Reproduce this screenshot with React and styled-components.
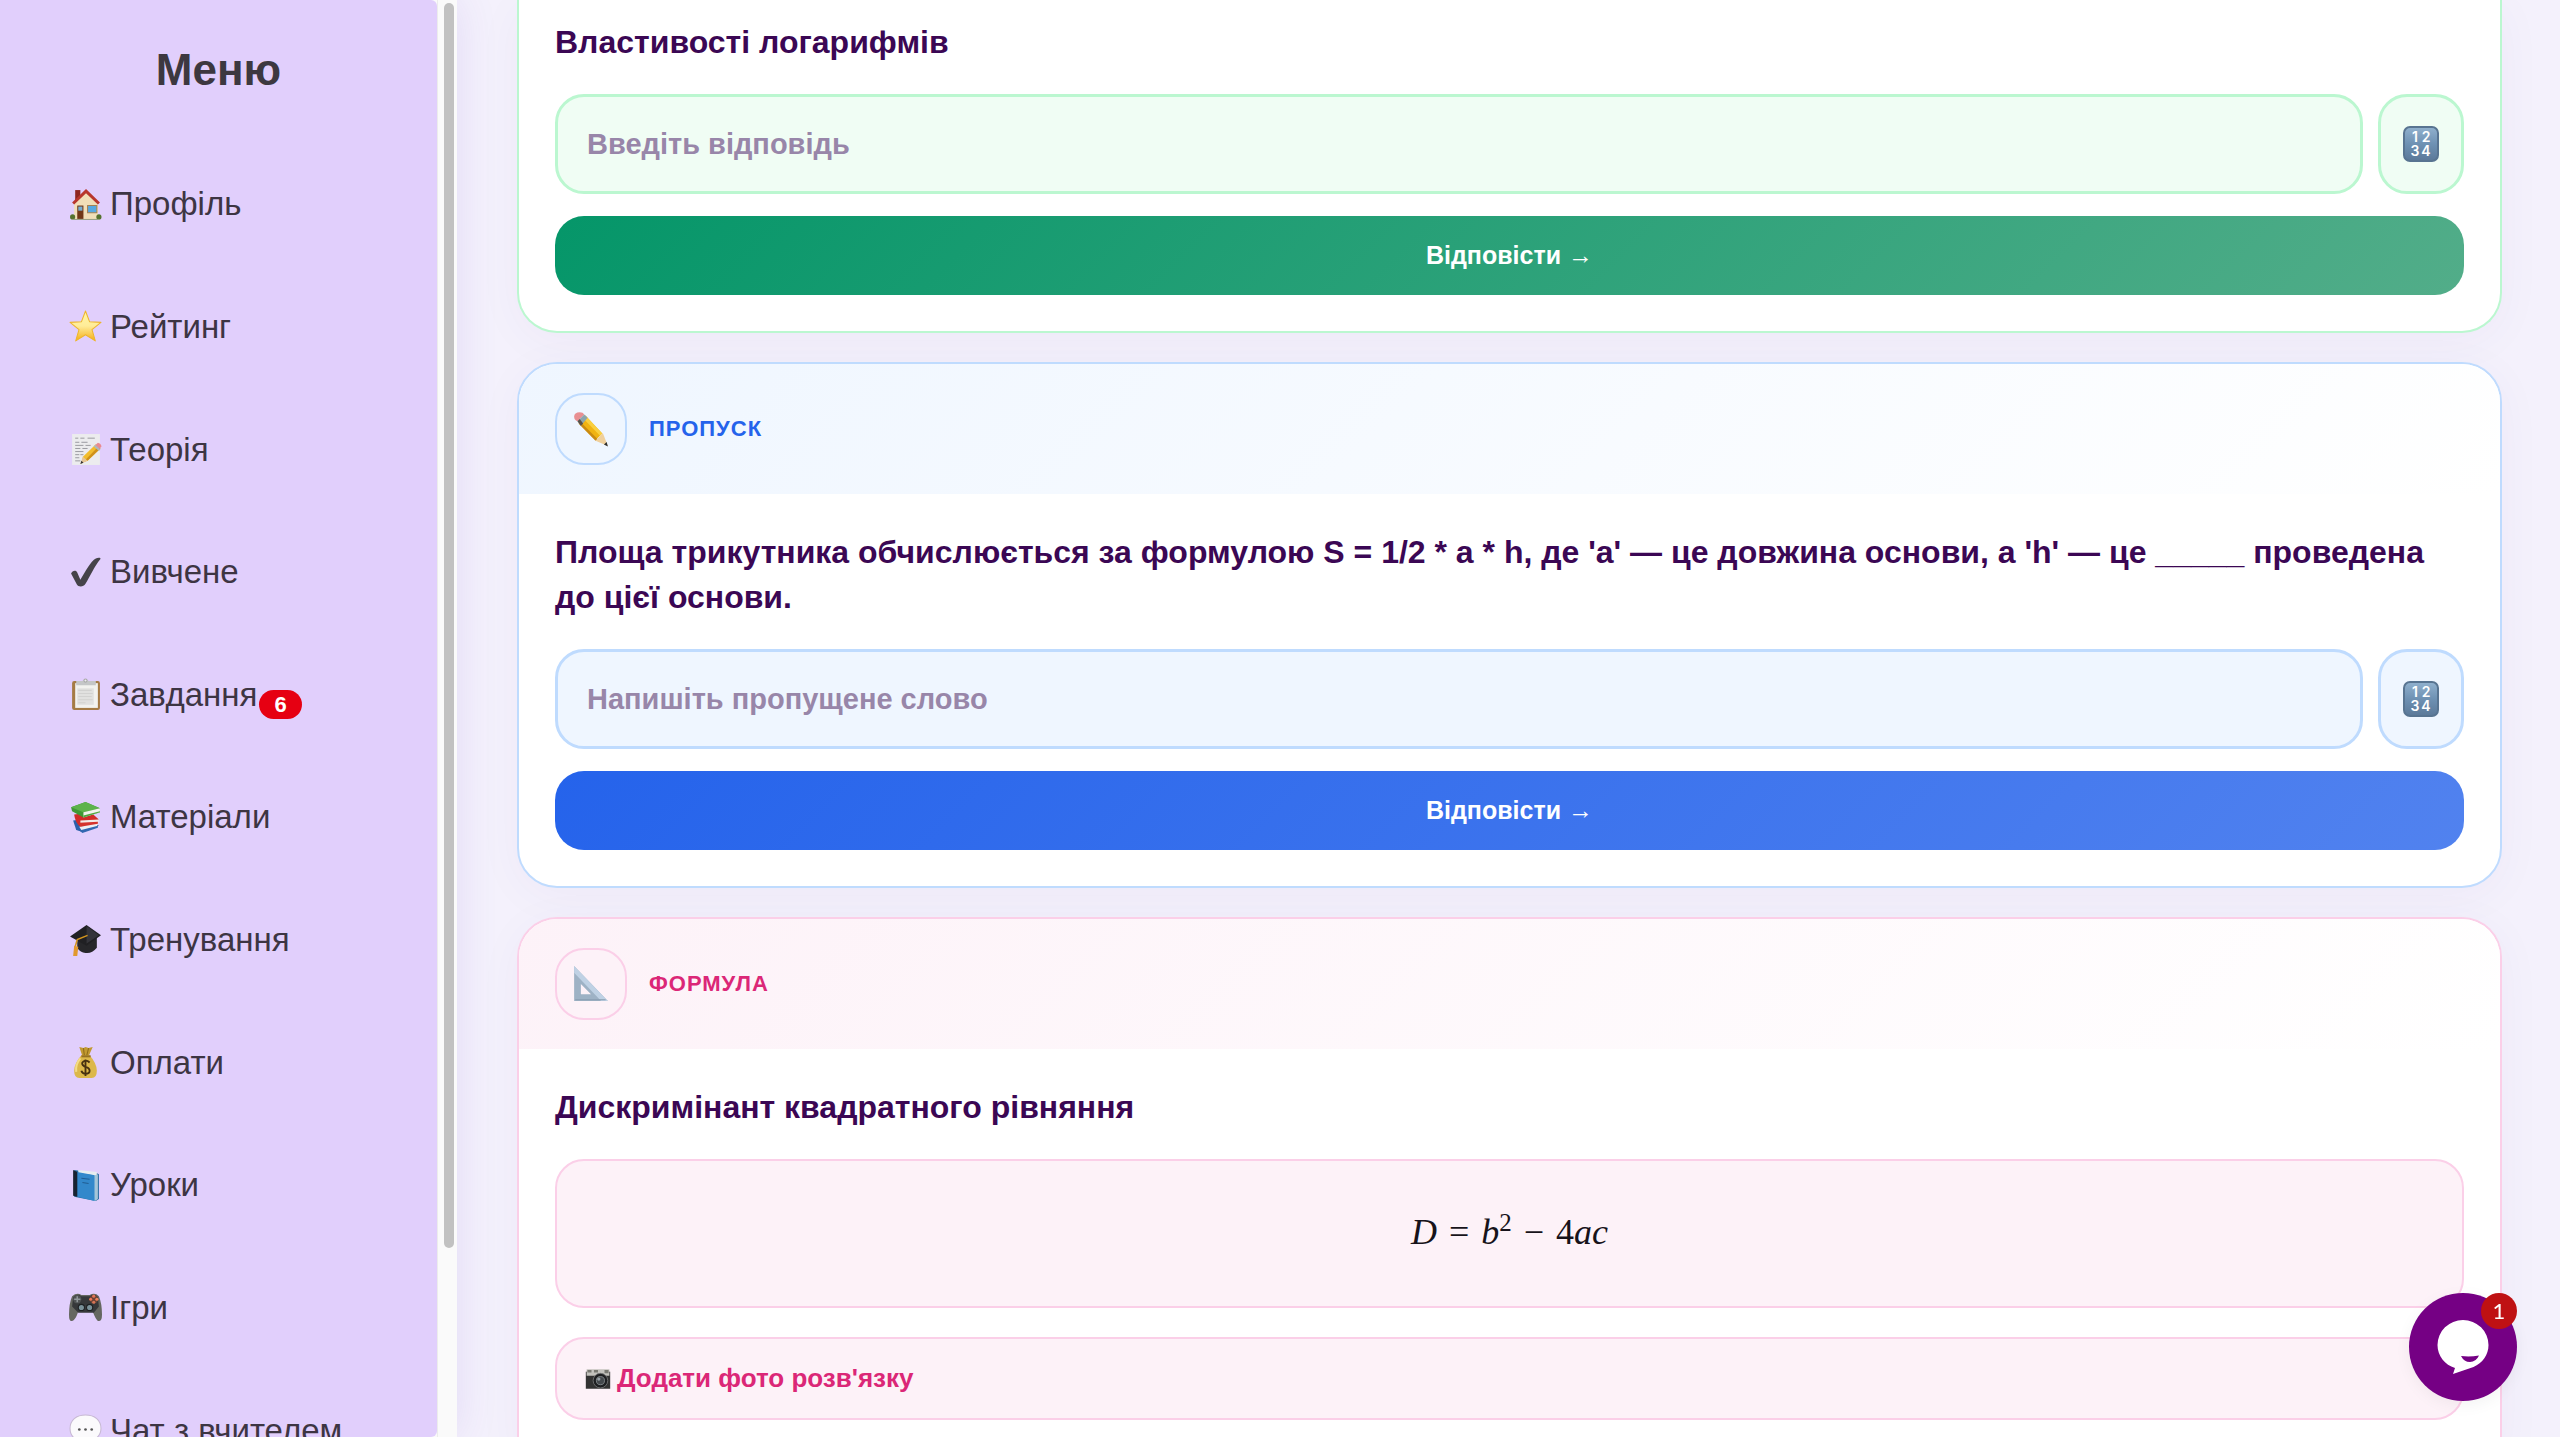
import React from "react";
import styled, { createGlobalStyle } from "styled-components";

const GlobalStyle = createGlobalStyle`
  * {
    box-sizing: border-box;
  }

  body {
    margin: 0;
    font-family: "Liberation Sans", Arial, sans-serif;
    background: #f4f1fc;
  }
`;

const Page = styled.div`
  display: flex;
  height: 100vh;
  overflow: hidden;
`;

const Sidebar = styled.aside`
  display: flex;
  flex: none;
  width: 457px;
  z-index: 1;
  background: #fafafa;
  box-shadow: 0 0 40px rgba(100, 60, 200, 0.12);
`;

const SidebarBody = styled.div`
  flex: 1;
  overflow: hidden;
  background: #e1cffc;
  border-radius: 0 6px 6px 0;
`;

const ScrollTrack = styled.div`
  width: 20px;
  padding: 3px 3px 3px 6px;
  border-left: 1px solid #ececec;
`;

const ScrollThumb = styled.div`
  height: 87%;
  border-radius: 6px;
  background: #c1c1c1;
`;

const MenuTitle = styled.h2`
  margin: 0;
  padding: 44px 0 47px;
  text-align: center;
  font-size: 44px;
  line-height: 52px;
  color: #3d3840;
`;

const MenuList = styled.ul`
  display: grid;
  grid-auto-rows: 1fr;
  height: 1349px;
  margin: 0;
  padding: 0;
  list-style: none;
`;

const MenuLink = styled.a`
  display: flex;
  align-items: center;
  height: 100%;
  padding-left: 69px;
  font-size: 33px;
  color: #3d3543;
  text-decoration: none;
  white-space: nowrap;

  svg {
    width: 33px;
    height: 33px;
    margin-right: 8px;
  }
`;

const MenuBadge = styled.span`
  align-self: center;
  margin: 20px 0 0 2px;
  padding: 0 15px;
  border-radius: 15px;
  font-size: 22px;
  font-weight: bold;
  line-height: 29px;
  color: white;
  background: #e60012;
`;

const Main = styled.main`
  display: flex;
  flex: 1;
  flex-direction: column;
  gap: 29px;
  min-width: 0;
  padding: 0 58px 0 60px;
`;

const Card = styled.section`
  flex: none;
  overflow: hidden;
  border: 2px solid ${({ $tone }) => $tone.border};
  border-radius: 40px;
  background: white;
  box-shadow: 0 8px 48px rgba(80, 30, 140, 0.04);

  ${({ $cut }) =>
    $cut === "top" &&
    `
    border-top: none;
    border-radius: 0 0 40px 40px;
  `}

  ${({ $cut }) =>
    $cut === "bottom" &&
    `
    border-bottom: none;
    border-radius: 40px 40px 0 0;
  `}
`;

const CardHeader = styled.header`
  display: flex;
  align-items: center;
  gap: 22px;
  padding: 29px 36px;
  background: linear-gradient(135deg, ${({ $tone }) => $tone.soft}, white);
`;

const IconBox = styled.div`
  display: flex;
  align-items: center;
  justify-content: center;
  width: 72px;
  height: 72px;
  border: 2px solid ${({ $tone }) => $tone.border};
  border-radius: 29px;
  background: ${({ $tone }) => $tone.soft};

  svg {
    width: 36px;
    height: 36px;
  }
`;

const CardLabel = styled.span`
  font-size: 22px;
  font-weight: bold;
  letter-spacing: 1px;
  color: ${({ $tone }) => $tone.main};
`;

const CardBody = styled.form`
  padding: ${({ $cut }) => ($cut === "top" ? "20px" : "36px")} 36px 36px;
`;

const Question = styled.h3`
  margin: 0 0 29px;
  font-size: 32px;
  line-height: 45px;
  color: #3b0754;
`;

const AnswerRow = styled.div`
  display: flex;
  gap: 15px;
`;

const AnswerInput = styled.input`
  flex: 1;
  min-width: 0;
  height: 100px;
  padding: 0 29px;
  border: 3px solid ${({ $tone }) => $tone.border};
  border-radius: 29px;
  font-family: inherit;
  font-size: 29px;
  font-weight: bold;
  color: #3b0754;
  background: ${({ $tone }) => $tone.soft};

  &::placeholder {
    color: #9886a9;
    opacity: 1;
  }
`;

const KeypadButton = styled.button`
  display: flex;
  align-items: center;
  justify-content: center;
  width: 86px;
  padding: 0;
  border: 3px solid ${({ $tone }) => $tone.border};
  border-radius: 29px;
  background: ${({ $tone }) => $tone.soft};
  cursor: pointer;

  svg {
    width: 36px;
    height: 36px;
  }
`;

const SubmitButton = styled.button`
  display: block;
  width: 100%;
  height: 79px;
  margin-top: 22px;
  border: none;
  border-radius: 29px;
  font-family: inherit;
  font-size: 25px;
  font-weight: bold;
  color: white;
  background: linear-gradient(
    135deg,
    ${({ $tone }) => $tone.main},
    ${({ $tone }) => $tone.light}
  );
  cursor: pointer;
`;

const FormulaBox = styled.div`
  display: flex;
  align-items: center;
  justify-content: center;
  height: 149px;
  padding-bottom: 4px;
  border: 2px solid ${({ $tone }) => $tone.border};
  border-radius: 29px;
  font-family: "Liberation Serif", "Times New Roman", serif;
  font-size: 36px;
  color: #17131a;
  background: ${({ $tone }) => $tone.soft};

  sup {
    font-size: 25px;
    line-height: 0;
  }
`;

const Operator = styled.span`
  margin: 0 12px;
`;

const PhotoButton = styled.button`
  display: flex;
  align-items: center;
  gap: 6px;
  width: 100%;
  height: 83px;
  margin-top: 29px;
  padding: 0 28px;
  border: 2px solid ${({ $tone }) => $tone.border};
  border-radius: 29px;
  font-family: inherit;
  font-size: 26px;
  font-weight: bold;
  color: ${({ $tone }) => $tone.main};
  background: ${({ $tone }) => $tone.soft};
  cursor: pointer;

  svg {
    width: 26px;
    height: 26px;
  }
`;

const ChatButton = styled.button`
  position: fixed;
  right: 43px;
  bottom: 36px;
  z-index: 2;
  width: 108px;
  height: 108px;
  padding: 0;
  border: none;
  border-radius: 50%;
  background: #750084;
  box-shadow: 0 4px 16px rgba(0, 0, 0, 0.05);
  cursor: pointer;

  svg {
    display: block;
    width: 108px;
    height: 108px;
  }
`;

const ChatBadge = styled.span`
  position: absolute;
  top: 0;
  right: 0;
  width: 36px;
  border-radius: 50%;
  font-family: Lato, "Liberation Sans", sans-serif;
  font-size: 22px;
  line-height: 36px;
  text-align: center;
  color: white;
  background: #bf1113;
`;

const green = {
  main: "#059669",
  light: "#52ad89",
  soft: "#f0fdf4",
  border: "#bbf7d0"
};
const blue = {
  main: "#2563eb",
  light: "#5182ef",
  soft: "#eff6ff",
  border: "#bfdbfe"
};
const pink = {
  main: "#db2777",
  light: "#e25293",
  soft: "#fdf2f8",
  border: "#fbcfe8"
};

const Icon = ({ children }) => (
  <svg viewBox="0 0 32 32" aria-hidden="true">
    {children}
  </svg>
);

const HouseIcon = () => (
  <Icon>
    <path d="M6 2h5v11H6z" fill="#8f2620" />
    <path d="M5 15 16.500 3 28 15v15H5z" fill="#f1dfb8" />
    <path d="M3 14 16.500 1 30 14l-2 2L16.500 5 5 16z" fill="#b8362c" />
    <path d="M8 17h6v13H8z" fill="#713717" />
    <path d="M9 18h4v4H9z" fill="#76aed1" />
    <path d="M18 17h9v7h-9z" fill="#57a9e2" stroke="#a48153" />
    <circle cx="3.500" cy="28" r="2.500" fill="#55722e" />
    <circle cx="29" cy="28" r="2.500" fill="#55722e" />
    <path d="M3 30h27v1H3z" fill="#99a184" />
  </Icon>
);

const StarIcon = () => (
  <Icon>
    <defs>
      <linearGradient id="star" x1="0" y1="0" x2="0" y2="1">
        <stop offset="0" stopColor="#fff6a5" />
        <stop offset=".5" stopColor="#ffec98" />
        <stop offset="1" stopColor="#f5ae16" />
      </linearGradient>
    </defs>
    <path
      d="m16 1 4 10.500 11 .5-8.700 7L25.500 30 16 24 6.500 30l3.200-11L1 12l11-.5z"
      fill="url(#star)"
      stroke="#eeb52b"
      strokeLinejoin="round"
    />
  </Icon>
);

const MemoIcon = () => (
  <Icon>
    <path d="M3 1h27v30H3z" fill="#ececee" />
    <path
      d="M6 5h3m2 0h4m3 0h7M6 9h4m2 0h6M6 12h8m2 0h5M6 15h5m2 0h5M6 18h8M6 21h4m1 0h3M6 24h4M6 27h5"
      stroke="#94949b"
      strokeWidth=".9"
    />
    <path d="m12 29 1.500-6L26 11l4.500 4L18 27z" fill="#f2bd2c" />
    <path d="m16 26 12.500-13 2 2L18 27z" fill="#cf9118" />
    <path d="m25 12 3-2.500q3 .5 3.500 3.500L29 16z" fill="#e98b92" />
    <path d="m24 13 1.500-1.500 5 4.500-1.500 1.500z" fill="#aeb8bc" />
    <path d="m11 30 2.500-7 4.500 4z" fill="#e6c596" />
    <path d="m11 30 1-3 2 1.800z" fill="#333" />
  </Icon>
);

const CheckIcon = () => (
  <Icon>
    <path
      d="M2 17c1-3 5-4 6-1l3 7C16 15 21 5 26 2.500c2-1 5-1 4.500.5C24 11 21 19 16 27c-2 3.500-7 3.500-8.500.5z"
      fill="#454349"
    />
  </Icon>
);

const ClipboardIcon = () => (
  <Icon>
    <rect x="3" y="3" width="27" height="28" rx="2" fill="#a57b45" />
    <path d="M6 5h22v24H6z" fill="#f2f2ef" />
    <path d="M8 10h16v16H8z" fill="#e1e1df" />
    <path d="M9 12h13M9 15h14M9 18h13M9 21h14M9 24h7" stroke="#d2d2d0" />
    <path d="M7 3h6q3-4 6 0h7v4H7z" fill="#c4c6c7" />
    <circle cx="16" cy="2.500" r="1.500" fill="#f0f0f0" stroke="#a8a8a8" />
  </Icon>
);

const BooksIcon = () => (
  <Icon>
    <path d="m4 19 15-2 10 7-16 6-6-2z" fill="#2c60aa" />
    <path d="m10 25 17-3 1 4-15 4z" fill="#edf0f4" />
    <path d="M10 28.500 28 24v2l-15 5z" fill="#3268b0" />
    <path d="m5 13 16-2 8 7-18 7q-5-4-6-12z" fill="#d22c28" />
    <path d="m11 19 18-1-1 5-17 2z" fill="#f2ece8" />
    <path d="m10 21 18-1v2l-17 3z" fill="#d4342d" />
    <path d="m2 6 14-5 14 6v4l-16 5L3 10z" fill="#409a35" />
    <path d="m2 6 14-5 14 6-16 4z" fill="#5db34b" />
    <path d="m14 11 16-4v4l-16 5z" fill="#f2f4ec" />
    <path d="m14 14 16-4v1l-16 5z" fill="#4fa63e" />
  </Icon>
);

const CapIcon = () => (
  <Icon>
    <path d="m8 14 8 5 11-6v10q-5 6-11 5-5 0-8-5z" fill="#27272a" />
    <path d="M1 12 17 1l14 10-14 10z" fill="#202023" />
    <path d="M17 2 29 11l-12 8z" fill="#34343a" />
    <path d="m18 11-10 4-2 7" fill="none" stroke="#d3951f" strokeWidth="1.500" />
    <path d="m5 21 4 1-1 9H4z" fill="#e1992e" />
  </Icon>
);

const MoneyIcon = () => (
  <Icon>
    <path d="m10 1 4 1 2-1 3 1 4-1-4 9h-6z" fill="#c29a31" />
    <path d="m14 2 1 8m4-8-2 8" stroke="#8e6b1a" />
    <path d="M12 9h8q7 8 7 15 0 7-5 7H10q-5 0-5-7 0-7 7-15z" fill="#dcb84a" />
    <path d="M11 12q-5 6-4 13" stroke="#f4dc85" strokeWidth="2" fill="none" />
    <path d="M12 10h9" stroke="#967122" strokeWidth="2" />
    <path
      d="M20 16q-3-3-6-1t1 5q5 1 5 4t-4 3q-3 0-4-3m4-11v16"
      fill="none"
      stroke="#473211"
      strokeWidth="1.800"
    />
  </Icon>
);

const BookIcon = () => (
  <Icon>
    <path d="m5 1 22 3 2 1v24l-3 2L5 27z" fill="#276c9f" />
    <path d="m9 1 18 2v26l-3 2V6L9 4z" fill="#e7edf0" />
    <path d="m8 3 17 3v25L8 27z" fill="#3288cb" />
    <path d="m4 1 4 2v24l-4-1z" fill="#172331" />
    <path d="m12 9 8 1m-7 3 6 1" stroke="#205e93" />
    <path d="M25 6v25l3-2V5z" fill="#a5c6d8" />
  </Icon>
);

const GameIcon = () => (
  <Icon>
    <path
      d="M3 4q5-4 9-1h8q5-3 9 1 3 7 3 18 0 7-4 6-2-1-5-9H9q-3 9-6 9-3 1-3-6Q0 11 3 4z"
      fill="#656760"
    />
    <path d="M4 5q4-4 8-1h8q5-3 8 1l1 9-5 6H9l-6-6z" fill="#36383a" />
    <circle cx="8" cy="7" r="4" fill="#505354" />
    <path d="M8 4v6M5 7h6" stroke="#90979a" strokeWidth="1.500" />
    <circle cx="24" cy="7" r="4" fill="#6b4337" />
    <circle cx="24" cy="4" r="1.500" fill="#e27555" />
    <circle cx="24" cy="10" r="1.500" fill="#d77555" />
    <circle cx="21" cy="7" r="1.500" fill="#ec7756" />
    <circle cx="27" cy="7" r="1.500" fill="#ef8359" />
    <circle cx="12" cy="15" r="3" fill="#799098" stroke="#1d2022" />
    <circle cx="20" cy="15" r="3" fill="#799098" stroke="#1d2022" />
  </Icon>
);

const SpeechIcon = () => (
  <Icon>
    <path
      d="M16 1c9 0 15 5 15 13 0 7-6 13-15 13-2 0-4 0-5-1-2 3-5 4-8 4 3-2 3-4 3-6-3-2-5-6-5-10C1 6 7 1 16 1z"
      fill="#fbfafc"
      stroke="#c7b9d3"
    />
    <circle cx="10" cy="15" r="1.300" fill="#555" />
    <circle cx="16" cy="15" r="1.300" fill="#555" />
    <circle cx="22" cy="15" r="1.300" fill="#555" />
  </Icon>
);

const PencilIcon = () => (
  <Icon>
    <path d="m5 11 6-7 15 16-6 6z" fill="#f0b312" />
    <path d="m9 6.500 2-2.500 15 16-2 2z" fill="#f9cf3f" />
    <path d="m5 11 1.500-1.500L22 25l-2 1.500z" fill="#c98a12" />
    <path d="M1 5q0-4 5-4 3 0 4 2L4 9Q1 8 1 5z" fill="#e88f92" />
    <path d="m4 9 6-6 3 3-6 7z" fill="#8ba4ad" />
    <path d="m4 9 2-2 3 4-2 2z" fill="#5a5148" />
    <path d="m20 26.500 6.500-7L31 31z" fill="#f0d09c" />
    <path d="m27.500 29.700 2.400-2.200L31 31.500z" fill="#303030" />
  </Icon>
);

const TriangleIcon = () => (
  <Icon>
    <path
      d="M1 0v31h30zm6 16 9 9H7z"
      fill="#9eb2c5"
      fillRule="evenodd"
    />
    <path d="m1 0 30 31h-6L1 6z" fill="#bfd1e4" />
    <path d="M2 30h27" stroke="#899db1" />
  </Icon>
);

const CameraIcon = () => (
  <Icon>
    <path d="M1 7h30v21H1z" fill="#333" />
    <path d="M2 4h28v8H2z" fill="#c3c2bd" />
    <path d="M3 5h5v3H3zm8 0h5v3h-5zm13 0h5v4h-5z" fill="#797972" />
    <circle cx="19" cy="18" r="9" fill="#1e1f21" stroke="#77797a" />
    <circle cx="19" cy="18" r="5" fill="#45494d" stroke="#8b9195" />
    <circle cx="17" cy="16" r="2" fill="#99a2a8" />
  </Icon>
);

const NumbersIcon = () => (
  <svg viewBox="0 0 36 36" aria-hidden="true">
    <defs>
      <linearGradient id="key" x1="0" y1="0" x2="0" y2="1">
        <stop offset="0" stopColor="#91b1ce" />
        <stop offset=".5" stopColor="#6e91b3" />
        <stop offset="1" stopColor="#5b7898" />
      </linearGradient>
    </defs>
    <rect
      x="1"
      y="1"
      width="34"
      height="34"
      rx="6"
      fill="url(#key)"
      stroke="#587491"
      strokeWidth="2"
    />
    <g
      fill="white"
      fontFamily="Inter, sans-serif"
      fontSize="14"
      fontWeight="600"
      textAnchor="middle"
    >
      <text x="12" y="16">1</text>
      <text x="23" y="16">2</text>
      <text x="12" y="30">3</text>
      <text x="23" y="30">4</text>
    </g>
  </svg>
);

const menu = [
  { title: "Профіль", icon: HouseIcon },
  { title: "Рейтинг", icon: StarIcon },
  { title: "Теорія", icon: MemoIcon },
  { title: "Вивчене", icon: CheckIcon },
  { title: "Завдання", icon: ClipboardIcon, count: 6 },
  { title: "Матеріали", icon: BooksIcon },
  { title: "Тренування", icon: CapIcon },
  { title: "Оплати", icon: MoneyIcon },
  { title: "Уроки", icon: BookIcon },
  { title: "Ігри", icon: GameIcon },
  { title: "Чат з вчителем", icon: SpeechIcon }
];

const Menu = () => (
  <Sidebar>
    <SidebarBody>
      <MenuTitle>Меню</MenuTitle>
      <nav>
        <MenuList>
          {menu.map(({ title, icon: ItemIcon, count }) => (
            <li key={title}>
              <MenuLink href="#">
                <ItemIcon />
                {title}
                {count && <MenuBadge>{count}</MenuBadge>}
              </MenuLink>
            </li>
          ))}
        </MenuList>
      </nav>
    </SidebarBody>
    <ScrollTrack>
      <ScrollThumb />
    </ScrollTrack>
  </Sidebar>
);

const Answer = ({ tone, placeholder }) => (
  <>
    <AnswerRow>
      <AnswerInput
        $tone={tone}
        type="text"
        placeholder={placeholder}
        aria-label={placeholder}
      />
      <KeypadButton $tone={tone} type="button" aria-label="Клавіатура">
        <NumbersIcon />
      </KeypadButton>
    </AnswerRow>
    <SubmitButton $tone={tone}>Відповісти →</SubmitButton>
  </>
);

const TaskCard = ({ tone, icon, label, question, cut, children }) => (
  <Card $tone={tone} $cut={cut}>
    {label && (
      <CardHeader $tone={tone}>
        <IconBox $tone={tone}>{icon}</IconBox>
        <CardLabel $tone={tone}>{label}</CardLabel>
      </CardHeader>
    )}
    <CardBody $cut={cut} onSubmit={evt => evt.preventDefault()}>
      <Question>{question}</Question>
      {children}
    </CardBody>
  </Card>
);

const App = () => (
  <Page>
    <GlobalStyle />
    <Menu />
    <Main>
      <TaskCard tone={green} question="Властивості логарифмів" cut="top">
        <Answer tone={green} placeholder="Введіть відповідь" />
      </TaskCard>
      <TaskCard
        tone={blue}
        icon={<PencilIcon />}
        label="ПРОПУСК"
        question="Площа трикутника обчислюється за формулою S = 1/2 * a * h, де 'a' — це довжина основи, а 'h' — це _____ проведена до цієї основи."
      >
        <Answer tone={blue} placeholder="Напишіть пропущене слово" />
      </TaskCard>
      <TaskCard
        tone={pink}
        icon={<TriangleIcon />}
        label="ФОРМУЛА"
        question="Дискримінант квадратного рівняння"
        cut="bottom"
      >
        <FormulaBox $tone={pink}>
          <span>
            <i>D</i>
            <Operator>=</Operator>
            <i>b</i>
            <sup>2</sup>
            <Operator>−</Operator>4<i>ac</i>
          </span>
        </FormulaBox>
        <PhotoButton $tone={pink} type="button">
          <CameraIcon />
          Додати фото розв'язку
        </PhotoButton>
      </TaskCard>
    </Main>
    <ChatButton type="button" aria-label="Чат">
      <svg viewBox="0 0 108 108" aria-hidden="true">
        <path
          d="M54 27a25.500 25 0 0 1 25.500 25c0 10-6 18-15 22L44 81l2-6C36 72 28.500 63 28.500 52A25.500 25 0 0 1 54 27z"
          fill="white"
        />
        <path d="M52 63q9 1 18-.5-3 6.500-9 6.500-6 0-9-6z" fill="#750084" />
      </svg>
      <ChatBadge>1</ChatBadge>
    </ChatButton>
  </Page>
);

export default App;
